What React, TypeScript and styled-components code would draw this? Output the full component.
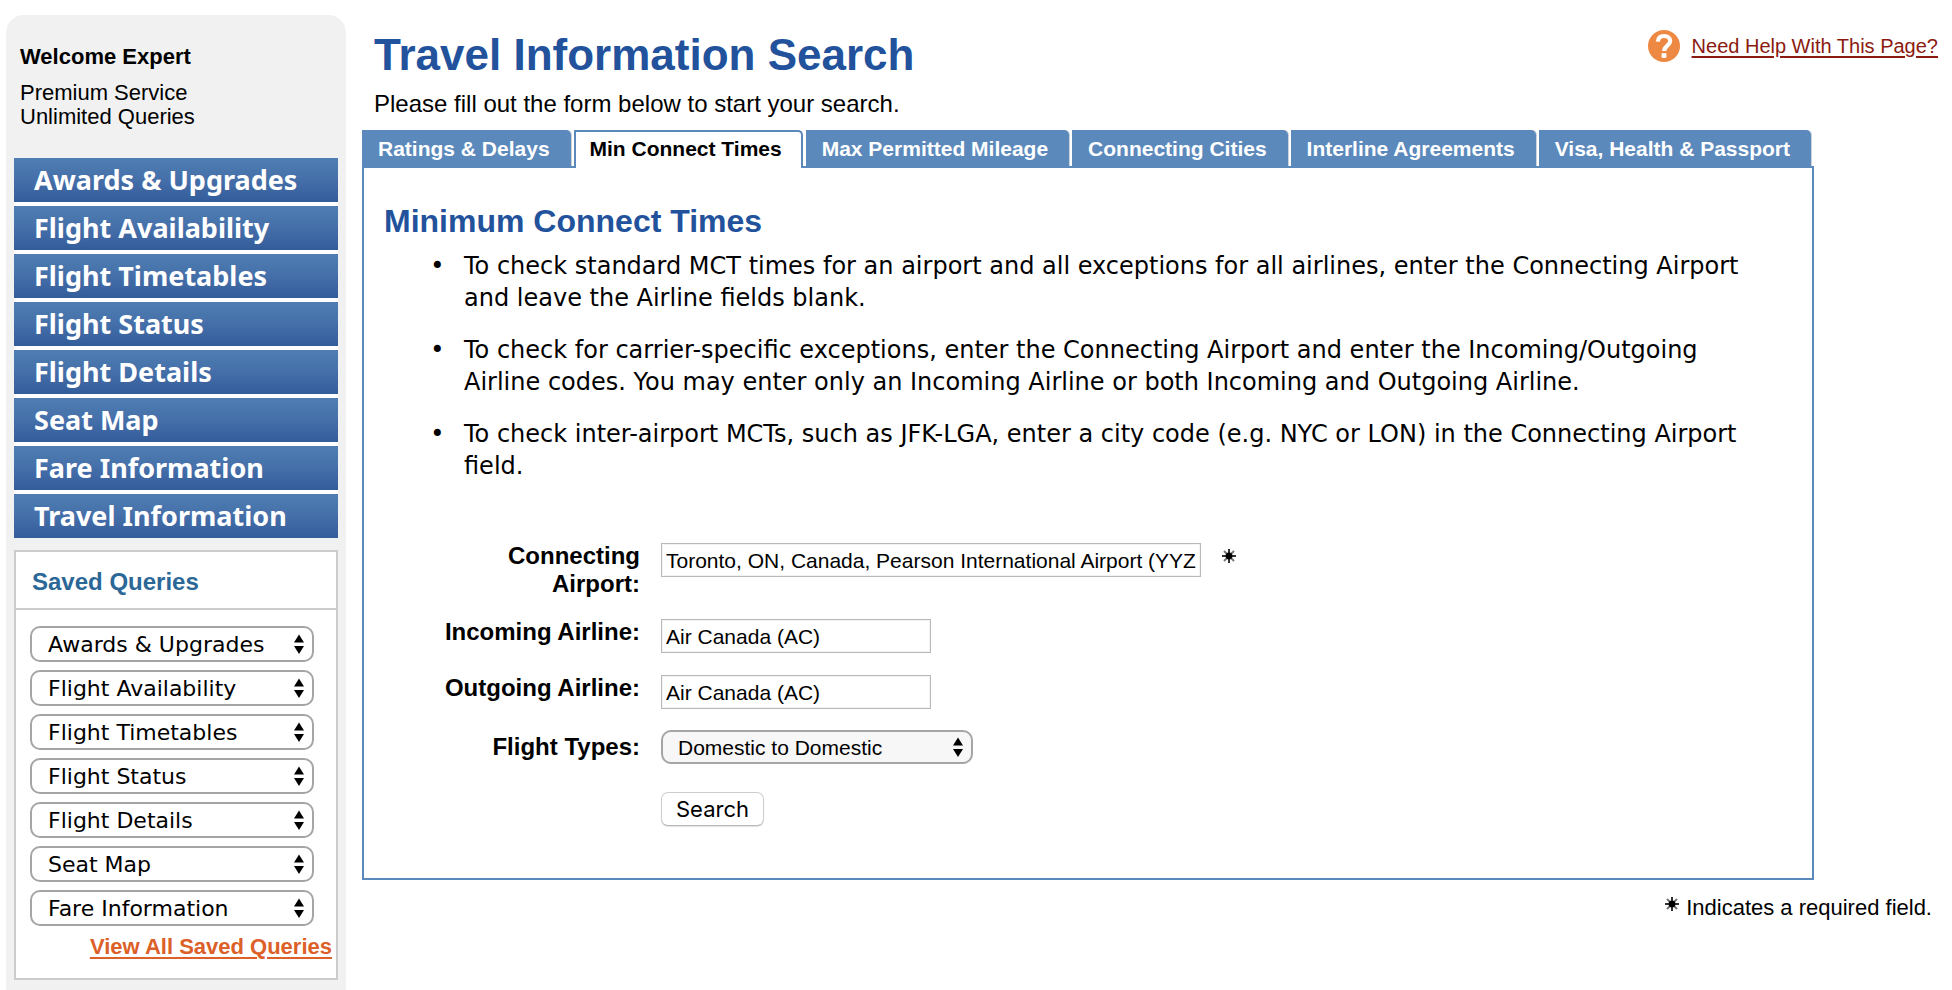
import React, { useState } from "react";
import styled, { createGlobalStyle, css } from "styled-components";

const sans = `"Liberation Sans", Arial, Helvetica, sans-serif`;
const verdana = `Verdana, "DejaVu Sans", sans-serif`;

const GlobalStyle = createGlobalStyle`
  *, *::before, *::after { box-sizing: border-box; }
  body {
    margin: 0;
    background: #fff;
    color: #000;
    font-family: ${sans};
    font-size: 22px;
    line-height: 24px;
  }
`;

const Page = styled.div`
  display: flex;
  gap: 16px;
  min-height: 100vh;
  padding: 15px 0 0 6px;
`;

const Sidebar = styled.aside`
  flex: 0 0 340px;
  padding: 30px 8px 10px;
  border-radius: 18px 18px 0 0;
  background: #f1f1f1;
`;

const Account = styled.div`
  padding-left: 6px;
  margin-bottom: 29px;

  p {
    margin: 0;
  }

  strong {
    display: block;
    margin-bottom: 12px;
  }
`;

const MainNav = styled.nav`
  display: flex;
  flex-direction: column;
  gap: 4px;
  margin-bottom: 12px;
  background: #fff;
`;

const NavLink = styled.a`
  height: 44px;
  padding-left: 20px;
  background: linear-gradient(#507eb3, #456fa9 50%, #335c9b);
  color: #fff;
  font: bold 27px/44px "Lucida Grande", "Noto Sans", sans-serif;
  text-decoration: none;
  white-space: nowrap;
`;

const SavedBox = styled.section`
  border: 2px solid #ccc;
  background: #fff;
`;

const SavedTitle = styled.h2`
  margin: 0;
  padding: 17px 16px 13px;
  border-bottom: 2px solid #ccc;
  color: #2b6797;
  font-size: 24px;
  line-height: 26px;
`;

const SavedList = styled.div`
  display: flex;
  flex-direction: column;
  gap: 8px;
  padding: 16px 22px 9px 14px;
`;

const ViewAll = styled.a`
  display: block;
  padding: 0 4px 19px;
  color: #dc6027;
  font-weight: bold;
  text-align: right;
  text-underline-offset: 3px;
`;

const SelectWrap = styled.span<{ $width?: string }>`
  position: relative;
  display: block;
  width: ${(p) => p.$width ?? "100%"};

  svg {
    position: absolute;
    top: 50%;
    right: 10px;
    margin-top: -10px;
    pointer-events: none;
  }
`;

const Select = styled.select<{ $form?: boolean }>`
  display: block;
  width: 100%;
  height: 36px;
  padding: 0 32px 0 16px;
  border: 2px solid #a5a5a5;
  border-radius: 10px;
  appearance: none;
  background: #fff;
  color: #000;
  font: 22px ${verdana};

  ${(p) =>
    p.$form &&
    css`
      height: 34px;
      padding-left: 15px;
      background: #f7f7f7;
      font: 21px ${sans};
    `}
`;

const Main = styled.main`
  flex: 1;
  min-width: 0;
`;

const Header = styled.header`
  display: flex;
  justify-content: space-between;
  align-items: flex-start;
  padding: 15px 14px 12px 12px;
`;

const Title = styled.h1`
  margin: 0 0 10px;
  color: #22529c;
  font-size: 44px;
  line-height: 50px;
`;

const Intro = styled.p`
  margin: 0;
  font-size: 24px;
  line-height: 28px;
`;

const HelpLink = styled.a`
  display: flex;
  align-items: center;
  gap: 12px;
  color: #8b1a10;
  font-size: 20px;
  line-height: 32px;
  text-underline-offset: 3px;
  white-space: nowrap;
`;

const Content = styled.div`
  margin-right: 138px;
`;

const Tabs = styled.nav`
  display: flex;
  gap: 3px;
`;

const Tab = styled.a<{ $active?: boolean }>`
  flex: 1 0 auto;
  height: 36px;
  padding: 0 16px;
  border-top-right-radius: 5px;
  background: #5b89bc;
  box-shadow: 1px 0 0 #ccd2da;
  color: #fff;
  font-size: 21px;
  font-weight: bold;
  line-height: 37px;
  text-decoration: none;
  white-space: nowrap;

  &:last-child {
    margin-right: 3px;
  }

  ${(p) =>
    p.$active &&
    css`
      height: 38px;
      margin-bottom: -2px;
      padding: 0 14px;
      border: 2px solid #5b89bc;
      border-bottom: 0;
      background: #fff;
      box-shadow: none;
      color: #000;
      line-height: 33px;
    `}
`;

const Panel = styled.section`
  padding: 35px 28px 52px 20px;
  border: 2px solid #5b89bc;
`;

const PanelTitle = styled.h2`
  margin: 0 0 11px;
  color: #22529c;
  font-size: 32px;
  line-height: 36px;
`;

const Tips = styled.ul`
  display: flex;
  flex-direction: column;
  gap: 20px;
  margin: 0 0 60px;
  padding: 0 16px 0 80px;
  list-style-type: "•\u2002\u00a0";
  font-family: ${verdana};
  font-size: 24px;
  line-height: 32px;
`;

const Form = styled.form`
  display: flex;
  flex-direction: column;
  gap: 20px;
`;

const Row = styled.div<{ $center?: boolean }>`
  display: grid;
  grid-template-columns: 200px 1fr;
  column-gap: 21px;
  align-items: ${(p) => (p.$center ? "center" : "start")};
  padding-left: 56px;
`;

const Label = styled.label`
  font-size: 24px;
  font-weight: bold;
  line-height: 28px;
  text-align: right;
`;

const RequiredMark = styled.svg`
  flex: none;
  width: 16px;
  height: 16px;
`;

const Field = styled.div`
  display: flex;
  gap: 20px;
  padding: 1px 0;

  ${RequiredMark} {
    margin-top: 5px;
  }
`;

const TextInput = styled.input<{ $wide?: boolean }>`
  width: ${(p) => (p.$wide ? 540 : 270)}px;
  height: 34px;
  padding: 2px 4px 0;
  border: 1px solid #b9b9b9;
  box-shadow: inset 0 0 0 1px #f3f3f3;
  background: #fff;
  color: #000;
  font: 21px ${sans};
`;

const SearchButton = styled.button`
  grid-column: 2;
  justify-self: start;
  height: 34px;
  margin-top: 8px;
  padding: 1px 14px 0;
  border: 1px solid #cdcdcd;
  border-bottom-color: #b9b9b9;
  border-radius: 7px;
  background: #fff;
  box-shadow: 0 1px 1px #e2e2e2;
  color: #000;
  font: 22px/31px Inter, sans-serif;
`;

const RequiredNote = styled.p`
  display: flex;
  justify-content: flex-end;
  gap: 6px;
  margin: 16px 20px 0 0;
`;

const Required = () => (
  <RequiredMark viewBox="0 0 16 16" role="img" aria-label="required">
    <path d="M3 3l10 10M13 3L3 13" stroke="#777" strokeWidth="2" />
    <path d="M8 1v14M1 8h14" stroke="#333" strokeWidth="2" />
    <circle cx="8" cy="8" r="3.4" fill="#000" />
  </RequiredMark>
);

const Arrows = () => (
  <svg width="10" height="20" viewBox="0 0 10 20" aria-hidden="true">
    <path d="M5 0.5L10 8.5H0zM0 12h10L5 20z" fill="#000" />
  </svg>
);

const HelpIcon = () => (
  <svg width="32" height="32" viewBox="0 0 32 32" aria-hidden="true">
    <circle cx="16" cy="16" r="16" fill="#ee8943" />
    <path
      d="M9.8 11.6C10.2 7.8 12.7 6 16 6c3.6 0 6.2 2 6.2 5.1 0 4.6-6 4.6-6 9.9"
      fill="none"
      stroke="#fff"
      strokeWidth="4.2"
    />
    <rect x="13.6" y="23.2" width="4.8" height="4.6" fill="#fff" />
  </svg>
);

const queries = [
  "Awards & Upgrades",
  "Flight Availability",
  "Flight Timetables",
  "Flight Status",
  "Flight Details",
  "Seat Map",
  "Fare Information",
];

const tabs = [
  "Ratings & Delays",
  "Min Connect Times",
  "Max Permitted Mileage",
  "Connecting Cities",
  "Interline Agreements",
  "Visa, Health & Passport",
];

export default function App() {
  const [activeTab, setActiveTab] = useState("Min Connect Times");

  return (
    <>
      <GlobalStyle />
      <Page>
        <Sidebar>
          <Account>
            <strong>Welcome Expert</strong>
            <p>Premium Service</p>
            <p>Unlimited Queries</p>
          </Account>
          <MainNav aria-label="Main">
            {[...queries, "Travel Information"].map((name) => (
              <NavLink key={name} href="#">
                {name}
              </NavLink>
            ))}
          </MainNav>
          <SavedBox>
            <SavedTitle>Saved Queries</SavedTitle>
            <SavedList>
              {queries.map((name) => (
                <SelectWrap key={name}>
                  <Select aria-label={name}>
                    <option>{name}</option>
                  </Select>
                  <Arrows />
                </SelectWrap>
              ))}
            </SavedList>
            <ViewAll href="#">View All Saved Queries</ViewAll>
          </SavedBox>
        </Sidebar>

        <Main>
          <Header>
            <div>
              <Title>Travel Information Search</Title>
              <Intro>Please fill out the form below to start your search.</Intro>
            </div>
            <HelpLink href="#">
              <HelpIcon />
              Need Help With This Page?
            </HelpLink>
          </Header>

          <Content>
            <Tabs aria-label="Travel information">
              {tabs.map((name) => (
                <Tab
                  key={name}
                  href="#"
                  $active={name === activeTab}
                  aria-current={name === activeTab ? "page" : undefined}
                  onClick={() => setActiveTab(name)}
                >
                  {name}
                </Tab>
              ))}
            </Tabs>
            <Panel>
              <PanelTitle>Minimum Connect Times</PanelTitle>
              <Tips>
                <li>
                  To check standard MCT times for an airport and all exceptions for all
                  airlines, enter the Connecting Airport and leave the Airline fields
                  blank.
                </li>
                <li>
                  To check for carrier-specific exceptions, enter the Connecting Airport
                  and enter the Incoming/Outgoing Airline codes. You may enter only an
                  Incoming Airline or both Incoming and Outgoing Airline.
                </li>
                <li>
                  To check inter-airport MCTs, such as JFK-LGA, enter a city code (e.g.
                  NYC or LON) in the Connecting Airport field.
                </li>
              </Tips>
              <Form onSubmit={(e) => e.preventDefault()}>
                <Row>
                  <Label htmlFor="airport">Connecting Airport:</Label>
                  <Field>
                    <TextInput
                      id="airport"
                      $wide
                      required
                      defaultValue="Toronto, ON, Canada, Pearson International Airport (YYZ)"
                    />
                    <Required />
                  </Field>
                </Row>
                <Row>
                  <Label htmlFor="incoming">Incoming Airline:</Label>
                  <Field>
                    <TextInput id="incoming" defaultValue="Air Canada (AC)" />
                  </Field>
                </Row>
                <Row>
                  <Label htmlFor="outgoing">Outgoing Airline:</Label>
                  <Field>
                    <TextInput id="outgoing" defaultValue="Air Canada (AC)" />
                  </Field>
                </Row>
                <Row $center>
                  <Label htmlFor="types">Flight Types:</Label>
                  <SelectWrap $width="312px">
                    <Select id="types" $form>
                      <option>Domestic to Domestic</option>
                    </Select>
                    <Arrows />
                  </SelectWrap>
                </Row>
                <Row>
                  <SearchButton type="submit">Search</SearchButton>
                </Row>
              </Form>
            </Panel>
          </Content>
          <RequiredNote>
            <Required />
            Indicates a required field.
          </RequiredNote>
        </Main>
      </Page>
    </>
  );
}
